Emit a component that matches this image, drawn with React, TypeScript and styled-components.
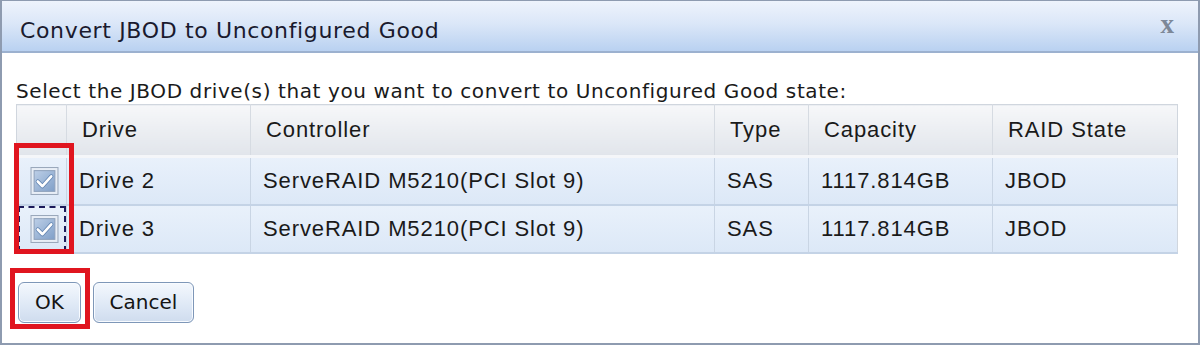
import styled, { createGlobalStyle } from "styled-components";

const GlobalStyle = createGlobalStyle`
  html, body {
    margin: 0;
    padding: 0;
    background: #ffffff;
  }
`;

const Dialog = styled.div`
  box-sizing: border-box;
  width: 1200px;
  height: 345px;
  border: 2px solid #8e9bb0;
  border-top-width: 1px;
  background: #ffffff;
  display: flex;
  flex-direction: column;
`;

const TitleBar = styled.div`
  height: 52px;
  display: flex;
  align-items: center;
  justify-content: space-between;
  padding: 8px 24px 0 18px;
  box-sizing: border-box;
  background: linear-gradient(#eef3fc 0%, #dbe7f8 45%, #b9d1f1 100%);
  border-bottom: 2px solid #9cb1cf;
`;

const Title = styled.span`
  font-family: "DejaVu Sans", sans-serif;
  font-size: 22px;
  color: #1a1a2e;
  letter-spacing: 0.65px;
`;

const Close = styled.span`
  font-family: "Liberation Serif", serif;
  font-weight: bold;
  font-size: 27px;
  color: #7d8898;
  margin-top: -12px;
`;

const Body = styled.div`
  padding: 26px 0 0 14px;
  display: flex;
  flex-direction: column;
`;

const Prompt = styled.div`
  font-family: "DejaVu Sans", sans-serif;
  font-size: 20px;
  color: #1a1a1a;
  line-height: 24px;
  letter-spacing: 0.6px;
`;

const TableWrap = styled.div`
  position: relative;
  margin-top: 1px;
  width: 1163px;
`;

const Grid = styled.table`
  width: 1161px;
  border-collapse: collapse;
  border: 1px solid #d0d6de;
  font-family: "Liberation Sans", Arial, sans-serif;
  font-size: 22px;
  letter-spacing: 0.9px;
  color: #1a1a1a;
  table-layout: fixed;
`;

const HeadCell = styled.th<{ $w: number }>`
  width: ${(p) => p.$w}px;
  height: 52px;
  padding: 0 0 0 15px;
  text-align: left;
  font-weight: normal;
  background: linear-gradient(#f6f7f9, #e1e5eb);
  border-left: 1px solid #d6dbe2;
  border-bottom: 3px solid #f4f6f9;
  box-sizing: border-box;
`;

const Row = styled.tr`
  background: linear-gradient(#e9f1fb, #dce8f7);
`;

const Cell = styled.td`
  height: 48px;
  padding: 0 0 0 12px;
  border-left: 1px solid #c9d5e4;
  border-bottom: 2px solid #c4d3e6;
  box-sizing: border-box;
  white-space: nowrap;
`;

const CheckCell = styled.td<{ $focus?: boolean }>`
  height: 48px;
  padding: 0;
  border-bottom: 2px solid #c4d3e6;
  box-sizing: border-box;
  vertical-align: middle;
  outline: ${(p) => (p.$focus ? "2px dashed #1c1a5a" : "none")};
  outline-offset: -3px;
`;

const Highlight = styled.div`
  position: absolute;
  box-sizing: border-box;
  border: 5px solid #e0151f;
  pointer-events: none;
`;

const Buttons = styled.div`
  position: relative;
  display: flex;
  gap: 12px;
  margin-top: 28px;
  padding-left: 2px;
`;

const Button = styled.button<{ $w: number }>`
  width: ${(p) => p.$w}px;
  height: 41px;
  border: 1px solid #7e97b8;
  border-radius: 6px;
  background: linear-gradient(#f4f8fd, #dfe9f6 55%, #cfdcee);
  font-family: "DejaVu Sans", sans-serif;
  font-size: 20px;
  color: #141414;
  padding: 0;
  box-shadow: inset 0 0 0 1px #f8fbff;
`;

function Check() {
  return (
    <svg width="29" height="28" viewBox="0 0 27 27" style={{ display: "block", margin: "0 0 0 13px" }}>
      <defs>
        <linearGradient id="cbg" x1="0" y1="0" x2="1" y2="1">
          <stop offset="0" stopColor="#bccfe7" />
          <stop offset="1" stopColor="#809fc8" />
        </linearGradient>
      </defs>
      <rect x="0.5" y="0.5" width="26" height="26" fill="#e8eef6" stroke="#9aa8bb" />
      <rect x="3.5" y="3.5" width="20" height="20" fill="url(#cbg)" stroke="#8ea1bb" />
      <path d="M7 14 L11.5 18.5 L20 9" fill="none" stroke="#5b7fae" strokeWidth="4" strokeLinecap="round" strokeLinejoin="round" />
      <path d="M7 14 L11.5 18.5 L20 9" fill="none" stroke="#ffffff" strokeWidth="2.6" strokeLinecap="round" strokeLinejoin="round" />
    </svg>
  );
}

const columns = [
  { label: "", w: 50 },
  { label: "Drive", w: 184 },
  { label: "Controller", w: 464 },
  { label: "Type", w: 94 },
  { label: "Capacity", w: 184 },
  { label: "RAID State", w: 185 },
];

const drives = [
  { name: "Drive 2", controller: "ServeRAID M5210(PCI Slot 9)", type: "SAS", capacity: "1117.814GB", state: "JBOD" },
  { name: "Drive 3", controller: "ServeRAID M5210(PCI Slot 9)", type: "SAS", capacity: "1117.814GB", state: "JBOD" },
];

export default function App() {
  return (
    <>
      <GlobalStyle />
      <Dialog>
        <TitleBar>
          <Title>Convert JBOD to Unconfigured Good</Title>
          <Close>x</Close>
        </TitleBar>
        <Body>
          <Prompt>Select the JBOD drive(s) that you want to convert to Unconfigured Good state:</Prompt>
          <TableWrap>
            <Grid>
              <thead>
                <tr>
                  {columns.map((c, i) => (
                    <HeadCell key={i} $w={c.w} style={i === 0 ? { borderLeft: "none" } : undefined}>
                      {c.label}
                    </HeadCell>
                  ))}
                </tr>
              </thead>
              <tbody>
                {drives.map((d, i) => (
                  <Row key={d.name}>
                    <CheckCell $focus={i === 1}>
                      <Check />
                    </CheckCell>
                    <Cell>{d.name}</Cell>
                    <Cell>{d.controller}</Cell>
                    <Cell>{d.type}</Cell>
                    <Cell>{d.capacity}</Cell>
                    <Cell>{d.state}</Cell>
                  </Row>
                ))}
              </tbody>
            </Grid>
            <Highlight style={{ left: -2, top: 39, width: 60, height: 111 }} />
          </TableWrap>
          <Buttons>
            <Button $w={63}>OK</Button>
            <Button $w={101}>Cancel</Button>
            <Highlight style={{ left: -6, top: -14, width: 80, height: 61 }} />
          </Buttons>
        </Body>
      </Dialog>
    </>
  );
}
